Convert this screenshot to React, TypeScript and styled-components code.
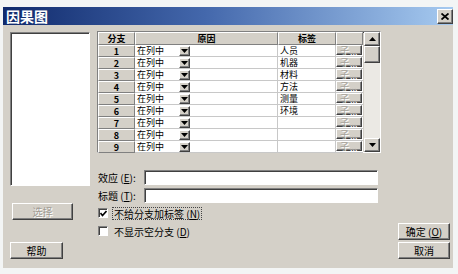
import React from "react";
import styled, { createGlobalStyle, css } from "styled-components";

const Global = createGlobalStyle`
  html, body { margin: 0; padding: 0; }
  body {
    width: 458px; height: 274px; overflow: hidden;
    background: #f3f5f5;
    font-family: "Noto Sans CJK SC", "Liberation Sans", sans-serif;
    font-size: 10px; color: #000;
  }
`;

const raised = css`
  border-top: 1px solid #ffffff;
  border-left: 1px solid #ffffff;
  border-right: 1px solid #404040;
  border-bottom: 1px solid #404040;
  box-shadow: inset -1px -1px 0 #808080;
`;

const sunken = css`
  border-top: 1px solid #808080;
  border-left: 1px solid #808080;
  border-right: 1px solid #ffffff;
  border-bottom: 1px solid #ffffff;
  box-shadow: inset 1px 1px 0 #404040;
`;

const Window = styled.div`
  margin: 7px 0 0 3px;
  width: 450px; height: 261px;
  background: #d4d0c8;
  display: flex; flex-direction: column;
`;

const TitleBar = styled.div`
  height: 18px; flex: none;
  background: linear-gradient(to right, #102a6c 0%, #4468ac 45%, #a6caf0 100%);
  display: flex; align-items: center; justify-content: space-between;
  padding: 0 0 0 3px;
`;

const Title = styled.span`
  color: #fff; font-weight: bold; font-size: 14px; line-height: 18px;
`;

const CloseBtn = styled.div`
  width: 16px; height: 15px; box-sizing: border-box;
  background: #d4d0c8; ${raised};
  display: flex; align-items: center; justify-content: center;
  margin-top: 1px;
`;

const Content = styled.div`
  flex: 1; display: flex;
  padding: 6px 3px 10px 7px;
`;

const LeftCol = styled.div`
  width: 80px; display: flex; flex-direction: column; align-items: flex-start;
  padding-top: 1px;
`;

const ListBox = styled.div`
  width: 80px; height: 154px; box-sizing: border-box;
  background: #fff; ${sunken};
`;

const Button = styled.div<{ $w: number; $disabled?: boolean; $mt?: number; $ml?: number }>`
  width: ${(p) => p.$w}px; height: 17px; box-sizing: border-box;
  margin-top: ${(p) => p.$mt ?? 0}px; margin-left: ${(p) => p.$ml ?? 0}px;
  background: #d4d0c8; ${raised};
  display: flex; align-items: center; justify-content: center;
  font-size: 10px;
  color: ${(p) => (p.$disabled ? "#a09c94" : "#000")};
  text-shadow: ${(p) => (p.$disabled ? "1px 1px 0 #fff" : "none")};
`;

const MidCol = styled.div`
  width: 285px; margin-left: 7px; display: flex; flex-direction: column;
`;

const GridBox = styled.div`
  width: 284px; height: 122px; box-sizing: border-box;
  ${sunken};
  display: flex; background: #d4d0c8;
`;

const Table = styled.div`
  display: grid;
  grid-template-columns: 37px 143px 58px 27px;
  grid-template-rows: 13px repeat(9, 12px);
  width: 265px;
`;

const HeadCell = styled.div`
  box-sizing: border-box; background: #d4d0c8; ${raised};
  box-shadow: none; border-right-color: #808080; border-bottom-color: #808080;
  display: flex; align-items: center; justify-content: center;
  font-weight: bold; font-size: 9px; line-height: 1;
`;

const WhiteCell = styled.div`
  box-sizing: border-box; background: #fff;
  border-right: 1px solid #c8c8c8; border-bottom: 1px solid #c8c8c8;
  display: flex; align-items: center; font-size: 9px; line-height: 1;
  padding-left: 2px; overflow: hidden;
`;

const ReasonText = styled.span`
  width: 42px;
`;

const DropBtn = styled.div`
  width: 11px; height: 10px; box-sizing: border-box; background: #d4d0c8; ${raised};
  display: flex; align-items: center; justify-content: center;
`;

const SubCell = styled.div`
  box-sizing: border-box; background: #fff; padding: 0 1px 1px 0;
  border-bottom: 1px solid #c8c8c8;
  display: flex;
`;

const SubBtn = styled.div`
  flex: 1; box-sizing: border-box; background: #d4d0c8; ${raised};
  font-size: 9px; line-height: 1; color: #a8a49c; text-shadow: 1px 1px 0 #fff;
  display: flex; align-items: center; padding-left: 3px;
`;

const ScrollBar = styled.div`
  width: 17px; display: flex; flex-direction: column;
  background: #ebe9e4; margin-left: 1px;
`;

const ScrollBtn = styled.div<{ $h: number }>`
  height: ${(p) => p.$h}px; box-sizing: border-box; background: #d4d0c8; ${raised};
  display: flex; align-items: center; justify-content: center;
`;

const Track = styled.div`
  flex: 1;
`;

const FieldRow = styled.div<{ $mt: number }>`
  display: flex; align-items: center; margin-top: ${(p) => p.$mt}px; height: 15px;
`;

const FieldLabel = styled.span`
  width: 46px; font-size: 10px; padding-left: 1px;
`;

const Input = styled.div`
  width: 234px; height: 15px; box-sizing: border-box; background: #fff; ${sunken};
`;

const CheckRow = styled.div<{ $mt: number }>`
  display: flex; align-items: center; margin-top: ${(p) => p.$mt}px; padding-left: 1px; height: 12px;
`;

const Box = styled.div`
  width: 10px; height: 10px; box-sizing: border-box; background: #fff; ${sunken};
  display: flex; align-items: center; justify-content: center; margin-right: 4px;
`;

const CheckLabel = styled.span<{ $focus?: boolean }>`
  font-size: 10px; line-height: 11px; padding: 0 1px;
  border: 1px dotted ${(p) => (p.$focus ? "#444" : "transparent")};
`;

const RightCol = styled.div`
  flex: 1; display: flex; flex-direction: column; justify-content: flex-end; align-items: flex-end;
  gap: 2px;
`;

const U = styled.span`
  text-decoration: underline;
`;

const Arrow = ({ dir }: { dir: "up" | "down" }) => (
  <svg width="7" height="4" viewBox="0 0 7 4">
    <polygon points={dir === "up" ? "3.5,0 7,4 0,4" : "0,0 7,0 3.5,4"} fill="#000" />
  </svg>
);

const labels = ["人员", "机器", "材料", "方法", "测量", "环境", "", "", ""];

export default function App() {
  return (
    <>
      <Global />
      <Window>
        <TitleBar>
          <Title>因果图</Title>
          <CloseBtn>
            <svg width="8" height="7" viewBox="0 0 8 7">
              <path d="M0.5 0.5 L7.5 6.5 M7.5 0.5 L0.5 6.5" stroke="#000" strokeWidth="1.8" />
            </svg>
          </CloseBtn>
        </TitleBar>
        <Content>
          <LeftCol>
            <ListBox />
            <Button $w={61} $mt={17} $ml={2} $disabled>选择</Button>
            <Button $w={53} $mt={22}>帮助</Button>
          </LeftCol>
          <MidCol>
            <GridBox>
              <Table>
                <HeadCell>分支</HeadCell>
                <HeadCell>原因</HeadCell>
                <HeadCell>标签</HeadCell>
                <HeadCell />
                {labels.map((l, i) => (
                  <React.Fragment key={i}>
                    <HeadCell>{i + 1}</HeadCell>
                    <WhiteCell>
                      <ReasonText>在列中</ReasonText>
                      <DropBtn>
                        <Arrow dir="down" />
                      </DropBtn>
                    </WhiteCell>
                    <WhiteCell>{l}</WhiteCell>
                    <SubCell>
                      <SubBtn>子...</SubBtn>
                    </SubCell>
                  </React.Fragment>
                ))}
              </Table>
              <ScrollBar>
                <ScrollBtn $h={14}><Arrow dir="up" /></ScrollBtn>
                <ScrollBtn $h={17} />
                <Track />
                <ScrollBtn $h={14}><Arrow dir="down" /></ScrollBtn>
              </ScrollBar>
            </GridBox>
            <FieldRow $mt={17}>
              <FieldLabel>效应 (<U>E</U>):</FieldLabel>
              <Input />
            </FieldRow>
            <FieldRow $mt={3}>
              <FieldLabel>标题 (<U>T</U>):</FieldLabel>
              <Input />
            </FieldRow>
            <CheckRow $mt={4}>
              <Box>
                <svg width="7" height="7" viewBox="0 0 7 7">
                  <path d="M0.5 3 L2.5 5.5 L6.5 1" stroke="#000" strokeWidth="1.6" fill="none" />
                </svg>
              </Box>
              <CheckLabel $focus>不给分支加标签 (<U>N</U>)</CheckLabel>
            </CheckRow>
            <CheckRow $mt={6}>
              <Box />
              <CheckLabel>不显示空分支 (<U>D</U>)</CheckLabel>
            </CheckRow>
          </MidCol>
          <RightCol>
            <Button $w={52}>确定 (<U>O</U>)</Button>
            <Button $w={52}>取消</Button>
          </RightCol>
        </Content>
      </Window>
    </>
  );
}
